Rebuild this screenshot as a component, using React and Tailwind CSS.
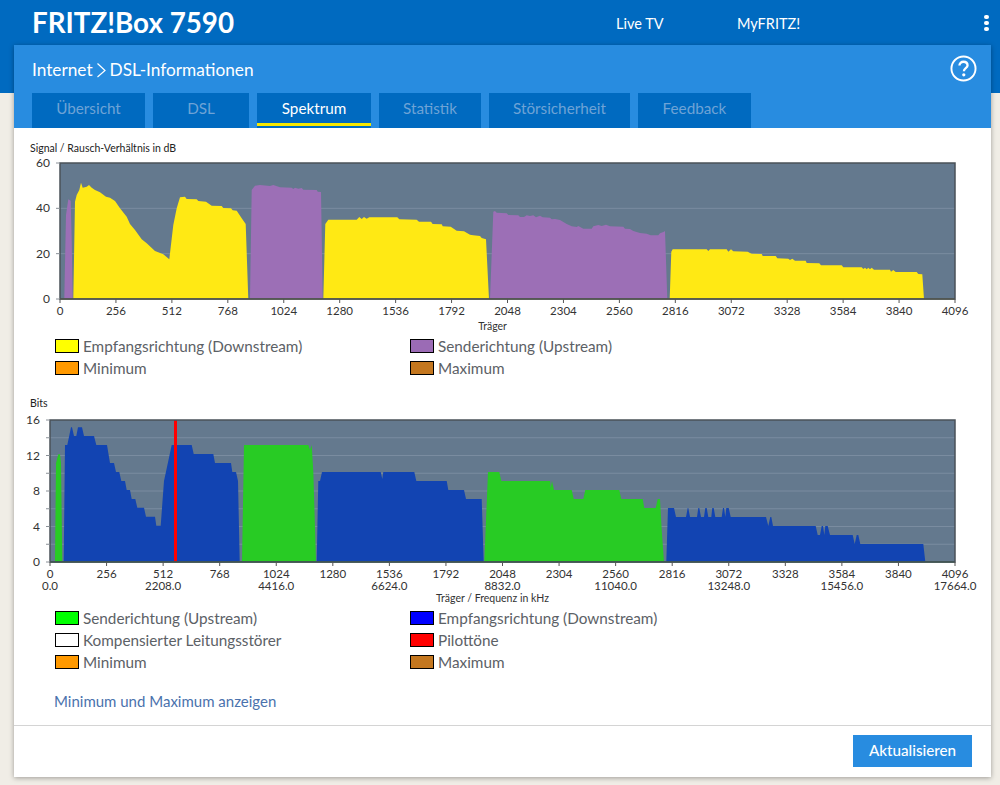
const FONT = { fontFamily: 'Lato, "Open Sans", sans-serif' };

const Y1 = "#ffe914";
const P1 = "#9c6fb6";
const G2 = "#28cb24";
const B2 = "#1244b2";

const snrShapes = [
  [P1, "64.3,299 66,215 68.3,199.3 70.7,200.7 71.7,240 72.7,299"],
  [Y1, "73.3,299 75,201.7 76.7,195 79.3,190 81,182.7 82.7,187.7 86.7,186.7 89,185 91.7,187.7 95,190 100,192.3 106,196.7 110,197.7 115,201 120,208.3 126.7,216.7 130,224 135,230 141.7,239.3 146.7,243.3 155,251 163.3,254.3 169.3,259.3 173.3,225 176.7,208.3 180,197.3 185,196.7 186.7,199 196.7,199.3 198.3,201 206,201.7 211.7,205.7 221.7,206 223.3,208 231,208.3 232.7,210.3 236.7,210.7 241.7,218.3 245.7,224 248.3,299"],
  [P1, "250,299 251.7,190 255,185.7 260,185 270,186 273.3,185 280,187.3 291.7,187.7 293.3,189 295,187.7 298.3,188.7 301.7,188 303.3,189.7 316.7,190 317.7,191.7 321,192 322.7,299"],
  [Y1, "323.3,299 325.3,224 328.3,219.7 356.7,219.7 359.3,217 361.7,219 364,217 366.7,218.7 369.3,217.3 397.3,217.3 399.3,219.3 416.7,219.7 419,221.7 431,221.7 432.7,224 441.7,224.3 442.7,226.3 450.7,226.7 456.7,230.7 464,231.3 470,234.7 473.3,235.3 480,236 481.7,238 486,239.3 489,299"],
  [P1, "490,299 493.3,211.7 495,211 496.7,212.7 506.7,213.3 508.3,215 518.3,215.3 520,217 524,217 526.7,215.3 530,216 533.3,215.3 536,217.3 540,215.7 542.7,217.3 550,217.7 551.7,219.3 555,219 560,220 566.7,224 571.7,226.3 576.7,227 578.3,226 583.3,228.7 591.7,228.7 593.3,226.3 598.3,225 601.7,226 606,224.7 610,226.3 623.3,226.7 625,228.7 630,229 633.3,231 640,233 646.7,233.7 650.7,235.3 658.3,235.3 660,233.3 664,231.7 665,231 667.3,299"],
  [Y1, "669.7,299 671.3,251.7 672.7,249.3 706.7,249.3 708.3,251 710,249.3 726.7,249.3 728.3,251.7 731,249.3 733.3,251.3 747.7,251.7 750,253 751.7,253.7 761.7,254 762.7,256 775.7,256 777.3,258.3 788.3,258.7 790,260 792.3,258.7 795,260.7 805.7,260.7 806.7,263 819.3,263.3 821,265.3 841.7,265.3 843.3,267.3 861.7,267.3 863.3,269 865,267.7 866.7,269.3 868.3,267.7 870,269.3 871.7,267.7 874,269.7 890,269.7 891,271.7 893.3,270 895.7,272 916.7,272 918.3,274 922.3,274.3 924,299"],
];

const bitShapes = [
  [G2, "55,561.7 56,463.3 58.3,454.3 60,454.3 61,463.3 62.3,561.7"],
  [B2, "63.7,561.7 65,445 67.3,445 71,427.3 72,427.3 74,436 76.3,436 78,427.3 82,427.3 84,436 94,436 96.3,445 107,445 110,463 114,463 116,472 119.3,472 121.3,481 125,481 126.7,490 130,490 131.7,499 135.3,499 137.3,507.7 144,507.7 146,516.7 155,516.7 156.3,525.7 160.7,525.7 164,481 171.7,445 191.7,445 193.7,454 213.3,454 215,463 231,463 232.3,472 236,472 238,481 239.7,561.7"],
  [G2, "242,561.7 244,445 308.3,445 310,450 311.7,445 313.3,471.7 316,561.7"],
  [B2, "316.7,561.7 318.3,481 320,481 322,472 380.7,472 382.3,479 383.3,472 414.3,472 416.3,481 446.7,481 448.3,490 464,490 466,499 481.7,499 483.7,561.7"],
  [G2, "484.3,561.7 488,472 499.3,472 501.3,481 550,481 550.7,487.7 552,481 554,490 571.7,490 573.7,499 583.3,499 585.3,490 619.3,490 621.3,499 642.7,499 644.3,508 655.7,508 657.7,499 660,499 661.7,530 664,561.7"],
  [B2, "666.3,561.7 668,508 674,508 676,517 686,517 687.7,508 688.3,508 690,517 697,517 698.3,508 699.3,508 701,517 704,517 705.3,508 706.7,508 708.3,517 711.3,517 712.3,508 713.7,508 715.3,517 721.7,517 723,508 724,508 725.3,517 726.3,508 728.7,508 730.7,517 766,517 768.3,526 770.3,517 771.3,517 773,526 815.7,526 817.7,535 820,535 821.7,526 823,526 824.3,535 825.3,526 827.7,526 830,535 852.7,535 854.7,544 856.7,535 858.3,535 860.3,544 923.3,544 925.3,561.7"],
];

const carriers = [0, 256, 512, 768, 1024, 1280, 1536, 1792, 2048, 2304, 2560, 2816, 3072, 3328, 3584, 3840, 4096];
const freqs = ["0.0", "2208.0", "4416.0", "6624.0", "8832.0", "11040.0", "13248.0", "15456.0", "17664.0"];

function Chart({ top, height, left, plotTop, plotBottom, title, titleX, titleY, yLabels, yGrid, yTicks, shapes, axisColor, axisTitle, axisTitleY, axisTitleSize, showFreq, labelEnd, children }) {
  const right = 955;
  const xOf = (v) => left + (v / 4096) * (right - left);
  const maxV = yLabels[yLabels.length - 1];
  const yOf = (v) => plotBottom - (v / maxV) * (plotBottom - plotTop);
  return (
    <svg width="977" height={height} viewBox={`14 ${top} 977 ${height}`} className="block" style={FONT}>
      <text x={titleX} y={titleY} fontSize="10.5" fill="#222">{title}</text>
      <rect x={left} y={plotTop} width={right - left} height={plotBottom - plotTop} fill="#64798e" />
      {yGrid.map((v) => (
        <line key={v} x1={left} x2={right} y1={yOf(v)} y2={yOf(v)} stroke="#7a8ca0" strokeWidth="1" />
      ))}
      {shapes.map(([fill, pts], i) => (
        <polygon key={i} points={pts} fill={fill} />
      ))}
      {children}
      <line x1={left} x2={right} y1={plotBottom} y2={plotBottom} stroke={axisColor} strokeWidth="1.5" />
      <rect x={left} y={plotTop} width={right - left} height={plotBottom - plotTop} fill="none" stroke="#4a5158" strokeWidth="1.5" />
      {yTicks.map((v) => (
        <line key={v} x1={left - 4} x2={left} y1={yOf(v)} y2={yOf(v)} stroke="#8a9097" strokeWidth="1" />
      ))}
      {yLabels.map((v) => (
        <text key={v} x={labelEnd} y={yOf(v) + 4} textAnchor="end" fontSize="12" fill="#333">{v}</text>
      ))}
      {carriers.map((c) => (
        <g key={c}>
          <line x1={xOf(c)} x2={xOf(c)} y1={plotBottom} y2={plotBottom + 4} stroke="#555" strokeWidth="1" />
          <text x={xOf(c)} y={plotBottom + 16} textAnchor="middle" fontSize="11.5" fill="#333">{c}</text>
        </g>
      ))}
      {showFreq && freqs.map((f, i) => (
        <text key={f} x={xOf(i * 512)} y={plotBottom + 28} textAnchor="middle" fontSize="11.5" fill="#333">{f}</text>
      ))}
      <text x={492.5} y={axisTitleY} textAnchor="middle" fontSize={axisTitleSize} fill="#333">{axisTitle}</text>
    </svg>
  );
}

function Legend({ color, label }) {
  return (
    <div className="flex items-center h-[22px]">
      <span className="w-[24px] h-[14px] border border-black shrink-0" style={{ backgroundColor: color }} />
      <span className="ml-[4px] text-[15.3px] text-[#5c6166] whitespace-nowrap">{label}</span>
    </div>
  );
}

function Tab({ label, w, active }) {
  return (
    <div className={`h-[35px] bg-[#006ac0] flex justify-center relative text-[15.25px] leading-[30px] ${active ? "text-white" : "text-[#6ea3d6]"}`} style={{ width: w }}>
      {label}
      {active && <span className="absolute left-0 right-0 bottom-[2px] h-[3px] bg-[#f5e800]" />}
    </div>
  );
}

export default function App() {
  return (
    <div className="h-[785px] overflow-hidden bg-[#f0ede6]" style={FONT}>
      <header className="h-[93px] bg-[#006ac0] flex items-start pl-[32px] text-white">
        <div className="w-[584px] text-[27.75px] font-bold leading-[46px]">FRITZ!Box 7590</div>
        <div className="w-[121px] text-[14.5px] leading-[47px]">Live TV</div>
        <div className="text-[14.5px] leading-[47px]">MyFRITZ!</div>
        <div className="ml-auto mr-[11px] mt-[15px] flex flex-col gap-[2px]">
          <span className="w-[5px] h-[4px] rounded-full bg-white" />
          <span className="w-[5px] h-[4px] rounded-full bg-white" />
          <span className="w-[5px] h-[4px] rounded-full bg-white" />
        </div>
      </header>

      <main className="-mt-[48px] ml-[14px] w-[977px] h-[732px] bg-white flex flex-col shadow-[0_1px_5px_rgba(0,0,0,0.35)] relative">
        <div className="h-[83px] bg-[#288ce0] text-white flex flex-col">
          <div className="h-[48px] flex items-center justify-between pl-[18px] pr-[14px]">
            <div className="flex items-center text-[17.25px] mt-[2px]">
              <span>Internet</span>
              <svg width="13" height="18" viewBox="0 0 13 18" className="mx-[2px]" fill="none" stroke="white" strokeWidth="1.2"><path d="M2.5 2.5 L10 9.5 L2.5 16" /></svg>
              <span>DSL-Informationen</span>
            </div>
            <svg width="27" height="27" viewBox="0 0 28 28" className="-mt-[2px]" fill="none">
              <circle cx="14" cy="14" r="12.5" stroke="white" strokeWidth="2" />
              <path d="M9.8 11 C9.8 8.5 11.6 7 14 7 C16.5 7 18.2 8.6 18.2 10.8 C18.2 13.6 14.4 13.8 14.4 16.8" stroke="white" strokeWidth="2.4" />
              <circle cx="14.3" cy="20.6" r="1.7" fill="white" />
            </svg>
          </div>
          <div className="flex gap-[8px] pl-[18px]">
            <Tab label="Übersicht" w={113} />
            <Tab label="DSL" w={96} />
            <Tab label="Spektrum" w={114} active />
            <Tab label="Statistik" w={102} />
            <Tab label="Störsicherheit" w={141} />
            <Tab label="Feedback" w={113} />
          </div>
        </div>

        <Chart
          top={128} height={207} left={60} plotTop={163} plotBottom={299}
          title="Signal / Rausch-Verhältnis in dB" titleX={30} titleY={152}
          yLabels={[0, 20, 40, 60]} yGrid={[20, 40]} yTicks={[0, 20, 40, 60]}
          shapes={snrShapes} axisColor="#6b6a2e" axisTitle="Träger" axisTitleY={330} axisTitleSize={10.5} labelEnd={50}
        />
        <div className="grid grid-cols-[355px_1fr] pl-[41px]">
          <Legend color="#ffff00" label="Empfangsrichtung (Downstream)" />
          <Legend color="#9b6bb5" label="Senderichtung (Upstream)" />
          <Legend color="#ff9900" label="Minimum" />
          <Legend color="#c4771f" label="Maximum" />
        </div>

        <Chart
          top={379} height={228} left={50} plotTop={420} plotBottom={562}
          title="Bits" titleX={30} titleY={407}
          yLabels={[0, 4, 8, 12, 16]} yGrid={[2, 4, 6, 8, 10, 12, 14]} yTicks={[0, 2, 4, 6, 8, 10, 12, 14, 16]}
          shapes={bitShapes} axisColor="#1f5f3a" axisTitle="Träger / Frequenz in kHz" axisTitleY={602} axisTitleSize={10.5} showFreq labelEnd={40}
        >
          <rect x="174" y="420" width="3" height="142" fill="#ff0000" />
        </Chart>
        <div className="grid grid-cols-[355px_1fr] pl-[41px]">
          <Legend color="#00ff00" label="Senderichtung (Upstream)" />
          <Legend color="#0000ff" label="Empfangsrichtung (Downstream)" />
          <Legend color="#ffffff" label="Kompensierter Leitungsstörer" />
          <Legend color="#ff0000" label="Pilottöne" />
          <Legend color="#ff9900" label="Minimum" />
          <Legend color="#c4771f" label="Maximum" />
        </div>

        <div className="mt-[17px] pl-[40px] h-[22px] leading-[22px] text-[15px] text-[#4a72ad]">Minimum und Maximum anzeigen</div>

        <div className="mt-[13px] border-t border-[#d4d4d4] flex justify-end pt-[9px] pr-[19px]">
          <div className="w-[119px] h-[32px] bg-[#288ce0] text-white text-[15.2px] font-medium leading-[31px] text-center">Aktualisieren</div>
        </div>
      </main>
    </div>
  );
}
